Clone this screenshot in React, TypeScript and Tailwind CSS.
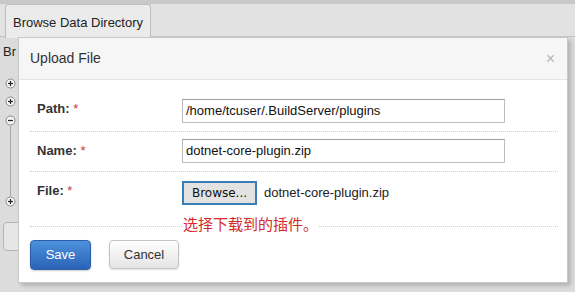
import React from "react";

const font = { fontFamily: '"Liberation Sans", Arial, "Noto Sans CJK SC", sans-serif' };

const TreeIcon = ({ minus }: { minus?: boolean }) => (
  <svg width="11" height="11" viewBox="0 0 11 11">
    <circle cx="5.5" cy="5.5" r="4.5" fill="#f4f4f4" stroke="#8a8a8a" />
    <path d="M3 5.5h5" stroke="#222" strokeWidth="1.2" />
    {!minus && <path d="M5.5 3v5" stroke="#222" strokeWidth="1.2" />}
  </svg>
);

const Row = ({
  label,
  children,
  className,
  labelClass,
}: {
  label: string;
  children: React.ReactNode;
  className: string;
  labelClass: string;
}) => (
  <div className={`flex border-b border-dotted border-[#cfcfcf] ${className}`}>
    <div
      className={`w-[152px] pl-[7px] font-bold text-[13px] leading-[18px] text-[#333] ${labelClass}`}
    >
      {label} <span className="text-[#c43c35] font-normal">*</span>
    </div>
    <div className="flex-1">{children}</div>
  </div>
);

const TextBox = ({ value }: { value: string }) => (
  <div className="w-[323px] h-[24px] border border-[#bcbcbc] border-t-[#9e9e9e] px-[3px] text-[13px] leading-[22px] text-[#111]">
    {value}
  </div>
);

export default function App() {
  return (
    <div
      className="relative w-[575px] h-[292px] overflow-hidden bg-[#dcdcdc]"
      style={font}
    >
      {/* background page */}
      <div className="h-[4px] bg-[#c9c9c9]" />
      <div className="flex pl-[5px] border-b border-[#c4c4c4] bg-[#e2e2e2] h-[33px]">
        <div className="px-[7px] pt-[8px] h-[34px] bg-[#ebebeb] border border-[#bdbdbd] border-b-0 rounded-t-[3px] text-[13px] text-[#222]">
          Browse Data Directory
        </div>
      </div>
      <div className="pl-[3px] pt-[5px] text-[13px] text-[#222]">Br</div>
      <div className="flex flex-col items-center w-[11px] ml-[5px] mt-[16px]">
        <TreeIcon />
        <div className="h-[7px]" />
        <TreeIcon />
        <div className="h-[8px]" />
        <TreeIcon minus />
        <div className="w-px h-[70px] bg-[#a8a8a8]" />
        <TreeIcon />
      </div>
      <div className="ml-[3px] mt-[15px] w-[30px] h-[29px] rounded-[4px] border border-[#b5b5b5] bg-[#e6e6e6]" />

      {/* modal */}
      <div className="absolute left-[18px] top-[37px] w-[550px] h-[246px] bg-white border border-[#c8c8c8] shadow-[3px_3px_4px_rgba(0,0,0,0.18)]">
        <div className="flex items-center justify-between h-[42px] pl-[11px] pr-[12px] bg-[#f6f6f6] border-b border-[#e5e5e5]">
          <span className="text-[14px] text-[#333]">Upload File</span>
          <span className="text-[16px] text-[#b5b5b5] leading-none">×</span>
        </div>
        <div className="pl-[11px] pr-[9px]">
          <Row label="Path:" className="pt-[19px] pb-[8px]" labelClass="pt-[1px]">
            <TextBox value="/home/tcuser/.BuildServer/plugins" />
          </Row>
          <Row label="Name:" className="pt-[7px] pb-[8px]" labelClass="pt-[3px]">
            <TextBox value="dotnet-core-plugin.zip" />
          </Row>
          <Row label="File:" className="pt-[9px]" labelClass="pt-[1px]">
            <div className="flex items-center gap-[7px]">
              <div className="w-[75px] h-[24px] border-2 border-[#3b7dbb] bg-[#e2e2e2] leading-[20px] text-center text-[#111] font-['DejaVu_Sans',sans-serif] text-[12px]">
                Browse...
              </div>
              <span className="text-[13px] text-[#222]">dotnet-core-plugin.zip</span>
            </div>
            <div className="mt-[8px] h-[13px] pl-[1px]">
              <span className="relative inline-block bg-white text-[15px] leading-[20px] text-[#d42a2a]">
                选择下载到的插件。
              </span>
            </div>
          </Row>
          <div className="flex gap-[18px] pt-[13px]">
            <button className="w-[61px] h-[30px] rounded-[4px] border border-[#2a5ea8] bg-gradient-to-b from-[#4d91dc] to-[#2b63b6] text-white text-[13px] shadow-[0_1px_2px_rgba(0,0,0,0.2)]">
              Save
            </button>
            <button className="w-[70px] h-[29px] rounded-[4px] border border-[#c2c2c2] bg-gradient-to-b from-white to-[#e4e4e4] text-[#333] text-[13px] shadow-[0_1px_2px_rgba(0,0,0,0.12)]">
              Cancel
            </button>
          </div>
        </div>
      </div>
    </div>
  );
}
